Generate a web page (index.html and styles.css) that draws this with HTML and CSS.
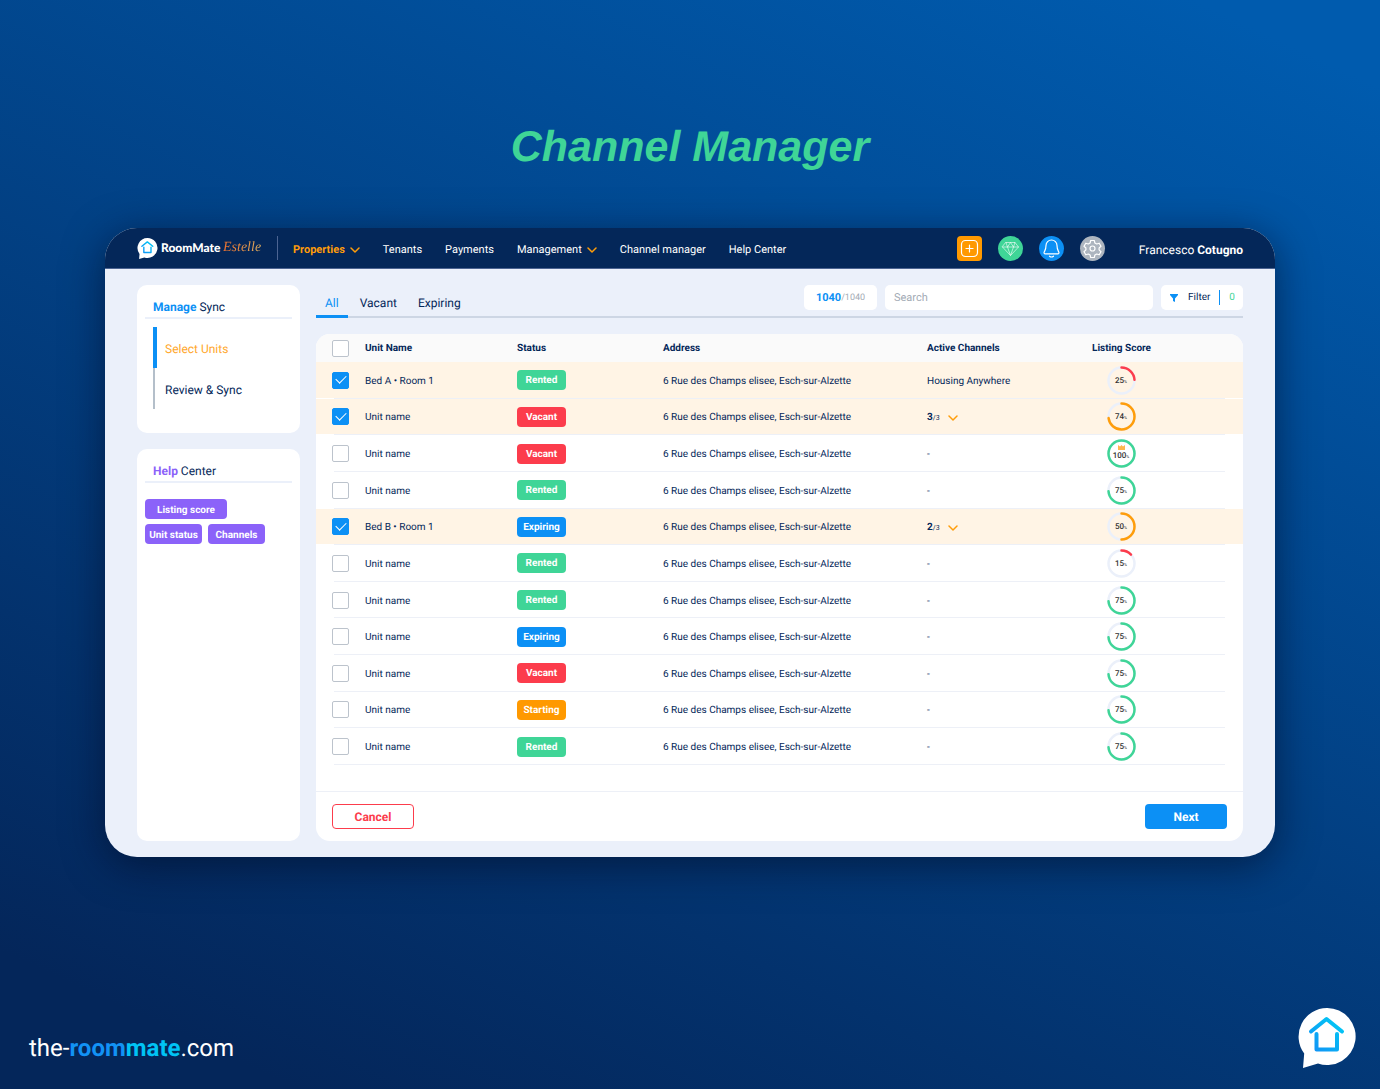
FILE: index.html
```html
<!DOCTYPE html>
<html lang="en">
<head>
<meta charset="utf-8">
<meta name="viewport" content="width=device-width, initial-scale=1">
<title>Channel Manager</title>
<link rel="stylesheet" href="styles.css">
</head>
<body>
<svg class="defs" aria-hidden="true">
  <defs>
    <linearGradient id="house-blue" x1="0" y1="1" x2="1" y2="0"><stop offset="0" stop-color="#1292f5"/><stop offset="1" stop-color="#00cdf5"/></linearGradient>
    <symbol id="logo" viewBox="0 0 58 60">
      <path fill="#fff" d="M29 0a28.500 28.500 0 1 1-9 55.500L5 60l1.200-14.500A28.500 28.500 0 0 1 29 0z"/>
      <path fill="none" stroke="url(#house-blue)" stroke-width="4" stroke-linecap="round" stroke-linejoin="round" d="M13 23.500 28.500 11 44 23.500M18.500 26v15.500h20.500V26"/>
    </symbol>
    <symbol id="chevron" viewBox="0 0 10 6"><path fill="none" stroke="#ff9d0a" stroke-width="1.500" stroke-linecap="round" stroke-linejoin="round" d="M1 1l4 4 4-4"/></symbol>
    <symbol id="track" viewBox="0 0 29 29"><circle cx="14.500" cy="14.500" r="13" fill="none" stroke="#ebf0fa" stroke-width="2.500"/></symbol>
  </defs>
</svg>

<h1 class="title">Channel Manager</h1>

<div class="app">
  <header class="topbar">
    <a class="brand" href="#"><svg class="brand-mark" aria-hidden="true"><use href="#logo"/></svg><span class="brand-name">RoomMate</span><span class="brand-sub">Estelle</span></a>
    <nav class="nav">
      <a class="nav-link active" href="#">Properties<svg class="chevron"><use href="#chevron"/></svg></a>
      <a class="nav-link" href="#">Tenants</a>
      <a class="nav-link" href="#">Payments</a>
      <a class="nav-link" href="#">Management<svg class="chevron"><use href="#chevron"/></svg></a>
      <a class="nav-link" href="#">Channel manager</a>
      <a class="nav-link" href="#">Help Center</a>
    </nav>
    <div class="actions">
      <button class="action add" type="button" aria-label="Add"><svg viewBox="0 0 25 25"><rect x="4.500" y="4.500" width="16" height="16" rx="4"/><path d="M12.500 9v7M9 12.500h7"/></svg></button>
      <button class="action gem" type="button" aria-label="Premium"><svg class="thin" viewBox="0 0 25 25"><path d="M8 6.500h9l3.500 4.500-8 8.500-8-8.500zM4.500 11h16M8 6.500 9.500 11l3 8.500 3-8.500L17 6.500M9.500 11l3-4.500 3 4.500"/></svg></button>
      <button class="action bell" type="button" aria-label="Notifications"><svg viewBox="0 0 25 25"><path d="M12.500 4a5.500 5.500 0 0 0-5.500 5.500c0 4-1 5-1.800 6.500-.4 1 0 1.800 1 1.800h12.600c1 0 1.400-.8 1-1.800C19 14.500 18 13.500 18 9.500A5.500 5.500 0 0 0 12.500 4zM10.500 20.200q2 1.600 4 0"/></svg></button>
      <button class="action gear" type="button" aria-label="Settings"><svg viewBox="0 0 25 25"><circle cx="12.500" cy="12.500" r="2.500"/><path d="M10.700 4.500h3.600l.6 2.500 1.800 1 2.500-.8 1.800 3.100-1.900 1.700v1.900l1.900 1.800-1.800 3.100-2.500-.8-1.800 1-.6 2.500h-3.600l-.6-2.500-1.800-1-2.500.8L4 15.700l1.900-1.800V12L4 10.300l1.800-3.100 2.500.8 1.800-1z"/></svg></button>
    </div>
    <div class="user">Francesco <b>Cotugno</b></div>
  </header>

  <div class="content">
    <aside class="sidebar">
      <section class="side-card">
        <h2 class="side-title"><b class="blue">Manage</b> Sync</h2>
        <ol class="steps">
          <li class="step current"><a href="#">Select Units</a></li>
          <li class="step"><a href="#">Review &amp; Sync</a></li>
        </ol>
      </section>
      <section class="side-card help">
        <h2 class="side-title"><b class="violet">Help</b> Center</h2>
        <div class="tags">
          <button class="tag wide" type="button">Listing score</button>
          <button class="tag" type="button">Unit status</button>
          <button class="tag" type="button">Channels</button>
        </div>
      </section>
    </aside>

    <main class="main">
      <div class="toolbar">
        <nav class="tabs">
          <a class="tab selected" href="#">All</a>
          <a class="tab" href="#">Vacant</a>
          <a class="tab" href="#">Expiring</a>
        </nav>
        <div class="tools">
          <div class="count"><b>1040</b><span>/1040</span></div>
          <input class="search" type="search" placeholder="Search" aria-label="Search">
          <button class="filter" type="button"><svg class="funnel" viewBox="0 0 8 8"><path fill="#0c90f5" d="M0 0h8v1L5 4.500V8L3 7V4.500L0 1z"/></svg>Filter<span class="filter-count">0</span></button>
        </div>
      </div>

      <div class="card">
        <table class="units">
          <colgroup><col class="c-check"><col class="c-name"><col class="c-status"><col><col class="c-channels"><col class="c-score"></colgroup>
          <thead><tr>
            <th class="pick"><input class="check" type="checkbox" aria-label="Select all"></th><th>Unit Name</th><th>Status</th><th>Address</th><th>Active Channels</th><th>Listing Score</th>
          </tr></thead>
          <tbody>
            <tr class="picked"><td class="pick"><input class="check" type="checkbox" aria-label="Select unit 1" checked></td><td class="txt">Bed A • Room 1</td><td><span class="badge rented">Rented</span></td><td class="txt">6 Rue des Champs elisee, Esch-sur-Alzette</td><td class="txt">Housing Anywhere</td>
              <td><svg class="ring low" viewBox="0 0 29 29"><use href="#track"/><circle class="arc" cx="14.500" cy="14.500" r="13" pathLength="100" stroke-dasharray="24 100"/><text x="14" y="17">25<tspan class="pc">%</tspan></text></svg></td></tr>
            <tr class="picked"><td class="pick"><input class="check" type="checkbox" aria-label="Select unit 2" checked></td><td class="txt">Unit name</td><td><span class="badge vacant">Vacant</span></td><td class="txt">6 Rue des Champs elisee, Esch-sur-Alzette</td><td class="txt"><button class="more" type="button"><b>3</b><small>/3</small><svg class="chevron"><use href="#chevron"/></svg></button></td>
              <td><svg class="ring mid" viewBox="0 0 29 29"><use href="#track"/><circle class="arc" cx="14.500" cy="14.500" r="13" pathLength="100" stroke-dasharray="73 100"/><text x="14" y="17">74<tspan class="pc">%</tspan></text></svg></td></tr>
            <tr><td class="pick"><input class="check" type="checkbox" aria-label="Select unit 3"></td><td class="txt">Unit name</td><td><span class="badge vacant">Vacant</span></td><td class="txt">6 Rue des Champs elisee, Esch-sur-Alzette</td><td class="txt">-</td>
              <td><svg class="ring high" viewBox="0 0 29 29"><use href="#track"/><circle class="arc" cx="14.500" cy="14.500" r="13"/><path fill="#ffb64d" d="M11 6l2 1.500L14.500 6 16 7.500 18 6v5h-7z"/><text x="14" y="19">100<tspan class="pc">%</tspan></text></svg></td></tr>
            <tr><td class="pick"><input class="check" type="checkbox" aria-label="Select unit 4"></td><td class="txt">Unit name</td><td><span class="badge rented">Rented</span></td><td class="txt">6 Rue des Champs elisee, Esch-sur-Alzette</td><td class="txt">-</td>
              <td><svg class="ring high" viewBox="0 0 29 29"><use href="#track"/><circle class="arc" cx="14.500" cy="14.500" r="13" pathLength="100" stroke-dasharray="74 100"/><text x="14" y="17">75<tspan class="pc">%</tspan></text></svg></td></tr>
            <tr class="picked"><td class="pick"><input class="check" type="checkbox" aria-label="Select unit 5" checked></td><td class="txt">Bed B • Room 1</td><td><span class="badge expiring">Expiring</span></td><td class="txt">6 Rue des Champs elisee, Esch-sur-Alzette</td><td class="txt"><button class="more" type="button"><b>2</b><small>/3</small><svg class="chevron"><use href="#chevron"/></svg></button></td>
              <td><svg class="ring mid" viewBox="0 0 29 29"><use href="#track"/><circle class="arc" cx="14.500" cy="14.500" r="13" pathLength="100" stroke-dasharray="50 100"/><text x="14" y="17">50<tspan class="pc">%</tspan></text></svg></td></tr>
            <tr><td class="pick"><input class="check" type="checkbox" aria-label="Select unit 6"></td><td class="txt">Unit name</td><td><span class="badge rented">Rented</span></td><td class="txt">6 Rue des Champs elisee, Esch-sur-Alzette</td><td class="txt">-</td>
              <td><svg class="ring low" viewBox="0 0 29 29"><use href="#track"/><circle class="arc" cx="14.500" cy="14.500" r="13" pathLength="100" stroke-dasharray="13 100"/><text x="14" y="17">15<tspan class="pc">%</tspan></text></svg></td></tr>
            <tr><td class="pick"><input class="check" type="checkbox" aria-label="Select unit 7"></td><td class="txt">Unit name</td><td><span class="badge rented">Rented</span></td><td class="txt">6 Rue des Champs elisee, Esch-sur-Alzette</td><td class="txt">-</td>
              <td><svg class="ring high" viewBox="0 0 29 29"><use href="#track"/><circle class="arc" cx="14.500" cy="14.500" r="13" pathLength="100" stroke-dasharray="74 100"/><text x="14" y="17">75<tspan class="pc">%</tspan></text></svg></td></tr>
            <tr><td class="pick"><input class="check" type="checkbox" aria-label="Select unit 8"></td><td class="txt">Unit name</td><td><span class="badge expiring">Expiring</span></td><td class="txt">6 Rue des Champs elisee, Esch-sur-Alzette</td><td class="txt">-</td>
              <td><svg class="ring high" viewBox="0 0 29 29"><use href="#track"/><circle class="arc" cx="14.500" cy="14.500" r="13" pathLength="100" stroke-dasharray="74 100"/><text x="14" y="17">75<tspan class="pc">%</tspan></text></svg></td></tr>
            <tr><td class="pick"><input class="check" type="checkbox" aria-label="Select unit 9"></td><td class="txt">Unit name</td><td><span class="badge vacant">Vacant</span></td><td class="txt">6 Rue des Champs elisee, Esch-sur-Alzette</td><td class="txt">-</td>
              <td><svg class="ring high" viewBox="0 0 29 29"><use href="#track"/><circle class="arc" cx="14.500" cy="14.500" r="13" pathLength="100" stroke-dasharray="74 100"/><text x="14" y="17">75<tspan class="pc">%</tspan></text></svg></td></tr>
            <tr><td class="pick"><input class="check" type="checkbox" aria-label="Select unit 10"></td><td class="txt">Unit name</td><td><span class="badge starting">Starting</span></td><td class="txt">6 Rue des Champs elisee, Esch-sur-Alzette</td><td class="txt">-</td>
              <td><svg class="ring high" viewBox="0 0 29 29"><use href="#track"/><circle class="arc" cx="14.500" cy="14.500" r="13" pathLength="100" stroke-dasharray="74 100"/><text x="14" y="17">75<tspan class="pc">%</tspan></text></svg></td></tr>
            <tr><td class="pick"><input class="check" type="checkbox" aria-label="Select unit 11"></td><td class="txt">Unit name</td><td><span class="badge rented">Rented</span></td><td class="txt">6 Rue des Champs elisee, Esch-sur-Alzette</td><td class="txt">-</td>
              <td><svg class="ring high" viewBox="0 0 29 29"><use href="#track"/><circle class="arc" cx="14.500" cy="14.500" r="13" pathLength="100" stroke-dasharray="74 100"/><text x="14" y="17">75<tspan class="pc">%</tspan></text></svg></td></tr>
          </tbody>
        </table>
        <div class="card-foot">
          <button class="btn cancel" type="button">Cancel</button>
          <button class="btn next" type="button">Next</button>
        </div>
      </div>
    </main>
  </div>
</div>

<footer class="site-foot">
  <a class="site" href="#">the-<b class="room">room</b><b class="mate">mate</b>.com</a>
  <svg class="site-mark" aria-hidden="true"><use href="#logo"/></svg>
</footer>
</body>
</html>
```
FILE: styles.css
```css
:root {
  --navy: #042759;
  --blue: #0c90f5;
  --green: #3fd597;
  --red: #fc3c4c;
  --orange: #ff9d0a;
  --violet: #8b62f9;
  --mist: #ebf0fa;
}

* { box-sizing: border-box; }

body {
  margin: 0;
  min-height: 100vh;
  display: flex;
  flex-direction: column;
  font-family: Roboto, "Liberation Sans", sans-serif;
  font-size: 10px;
  text-rendering: geometricPrecision;
  color: var(--navy);
  background: linear-gradient(205deg, #005bae 5%, #04265a 92%);
}

a { color: inherit; text-decoration: none; }
button { font: inherit; color: inherit; text-rendering: inherit; border: 0; padding: 0; background: none; }
h1, h2, ol { margin: 0; padding: 0; }
svg { display: block; }
.defs { position: absolute; width: 0; height: 0; }

.title {
  margin: 121px 0 55px;
  text-align: center;
  font: italic bold 43px/52px "Liberation Sans", Arial, sans-serif;
  color: var(--green);
}

.app {
  margin: 0 105px;
  border-radius: 32px;
  overflow: hidden;
  background: var(--mist);
  box-shadow: 0 8px 40px rgba(0, 8, 30, .55);
}

/* Top bar */
.topbar {
  display: flex;
  align-items: center;
  height: 41px;
  padding: 0 32px;
  background: var(--navy);
  border-bottom: 1px solid #4c6492;
  color: #fff;
}
.brand {
  display: flex;
  align-items: center;
  height: 24px;
  padding-right: 15px;
  border-right: 1px solid #4c6492;
}
.brand-mark { width: 21px; height: 21px; margin-right: 3px; }
.brand-name { font: 900 12px/16px Lato, sans-serif; width: 62px; }
.brand-sub {
  font: italic 14px/18px "Liberation Serif", serif;
  background: linear-gradient(90deg, #f0702c, #e0b060);
  background-clip: text;
  color: transparent;
  width: 39px;
}
.nav { display: flex; gap: 23px; margin-left: 15px; padding-top: 3px; }
.nav-link { display: flex; align-items: center; gap: 5px; font-size: 11px; line-height: 18px; white-space: nowrap; }
.nav-link.active { color: var(--orange); font-weight: 700; }
.chevron { width: 10px; height: 6px; }
.actions { display: flex; gap: 16px; margin-left: auto; }
.action { width: 25px; height: 25px; border-radius: 50%; }
.action svg { width: 25px; height: 25px; fill: none; stroke: #fff; stroke-width: 1.2; stroke-linecap: round; stroke-linejoin: round; }
.action .thin { stroke-width: .6; }
.add { background: #ff9900; border-radius: 4px; }
.gem { background: var(--green); }
.bell { background: var(--blue); }
.gear { background: #adb5bf; }
.user { margin-left: 34px; padding-top: 3px; font-size: 12px; line-height: 18px; white-space: nowrap; }
.user b { font-weight: 700; }

/* Sidebar */
.content { display: flex; gap: 16px; padding: 16px 32px; }
.sidebar { display: flex; flex-direction: column; gap: 16px; width: 163px; }
.side-card { padding: 12px 8px 24px; border-radius: 10px; background: #fff; }
.help { flex: 1; }
.side-title {
  padding: 0 8px;
  border-bottom: 2px solid var(--mist);
  font-size: 12px;
  line-height: 20px;
  font-weight: 400;
}
.blue { color: var(--blue); }
.violet { color: var(--violet); }
.steps { list-style: none; margin: 8px 8px 0; }
.step { height: 41px; padding-left: 10px; border-left: 2px solid #b4bfca; font-size: 12px; line-height: 44px; }
.step.current { padding-left: 8px; border-left: 4px solid var(--blue); color: #ffa72b; }
.tags { display: flex; flex-wrap: wrap; gap: 5px 6px; margin: 16px 20px 0 0; }
.tag { height: 20px; padding: 2px 4px 0; min-width: 57px; border-radius: 4px; background: var(--violet); color: #fff; font-weight: 700; }
.tag.wide { width: 82px; }

/* Tabs and tools */
.main { flex: 1; min-width: 0; display: flex; flex-direction: column; }
.toolbar {
  display: flex;
  justify-content: space-between;
  height: 33px;
  border-bottom: 2px solid #cdd6e4;
}
.tabs { display: flex; gap: 3px; }
.tab { height: 33px; padding: 0 9px; font-size: 12px; line-height: 36px; }
.tab.selected { color: var(--blue); border-bottom: 3px solid var(--blue); }
.tools { display: flex; gap: 8px; height: 25px; }
.count, .filter { display: flex; align-items: center; border-radius: 5px; background: #fff; }
.count { width: 73px; justify-content: center; color: #a3abb5; font-size: 9px; }
.count b { color: var(--blue); font-size: 11px; }
.search { width: 268px; padding: 0 9px; border: 0; border-radius: 5px; background: #fff; color: var(--navy); font: 11px Roboto, sans-serif; text-rendering: inherit; }
.search::placeholder { color: #a3abb5; }
.filter { width: 82px; padding-left: 9px; }
.funnel { width: 8px; height: 8px; margin-right: 10px; }
.filter-count { margin-left: 9px; padding-left: 9px; border-left: 1px solid var(--blue); line-height: 15px; color: var(--green); }

/* Units table */
.card { flex: 1; margin-top: 16px; border-radius: 14px; background: #fff; overflow: hidden; }
.units { width: 100%; height: 431px; table-layout: fixed; border-spacing: 0; margin-bottom: 26px; }
.c-check { width: 49px; }
.c-name { width: 152px; }
.c-status { width: 146px; }
.c-channels { width: 165px; }
.c-score { width: 151px; }
.units th, .units td { padding: 0; text-align: left; vertical-align: middle; white-space: nowrap; }
.units th { height: 28px; background: #fafafa; font-weight: 700; }
.units .pick { padding-left: 16px; }
.units .txt { padding-top: 2px; }
.units tbody tr {
  background:
    linear-gradient(#edf0f7, #edf0f7) 50% 100% / calc(100% - 36px) 1px no-repeat,
    linear-gradient(#fff, #fff) 0 100% / 100% 1px no-repeat;
}
.units tbody .picked { background-color: #fff4e5; }

.check {
  appearance: none;
  display: grid;
  place-items: center;
  width: 17px;
  height: 17px;
  margin: 0;
  border: 1px solid #bcc3cc;
  border-radius: 2px;
  background: #fff;
}
.check:checked { border-color: var(--blue); background: var(--blue); }
.check:checked::after {
  content: "";
  width: 9px;
  height: 5px;
  margin-bottom: 4px;
  border: solid #fff;
  border-width: 0 0 1px 1px;
  transform: rotate(-45deg);
}

.badge {
  display: block;
  width: 49px;
  height: 20px;
  border-radius: 4px;
  text-align: center;
  line-height: 22px;
  font-weight: 700;
  color: #fff;
}
.rented { background: var(--green); }
.vacant { background: var(--red); }
.expiring { background: var(--blue); }
.starting { background: #ff9900; }

.more { display: flex; align-items: center; }
.more small { font-size: 7px; }
.more .chevron { margin-left: 8px; }

.ring { width: 29px; height: 29px; margin-left: 15px; }
.arc { fill: none; stroke-width: 2.5; stroke-linecap: round; transform: rotate(-90deg); transform-origin: center; }
.low .arc { stroke: var(--red); }
.mid .arc { stroke: #ff9d0a; }
.high .arc { stroke: var(--green); }
.ring text { font-size: 8px; font-weight: 500; fill: #333; text-anchor: middle; }
.ring .pc { font-size: 4px; }

.card-foot { display: flex; justify-content: space-between; padding: 12px 16px; border-top: 1px solid #edf0f7; }
.btn { width: 82px; height: 25px; border-radius: 4px; font-size: 12px; font-weight: 700; }
.cancel { border: 1px solid var(--red); color: var(--red); }
.next { background: var(--blue); color: #fff; }

/* Page footer */
.site-foot { display: flex; justify-content: space-between; align-items: flex-end; margin-top: auto; padding: 0 24px 21px 29px; }
.site { font-size: 24px; line-height: 40px; color: #fff; }
.room { color: #1292f5; }
.mate { color: #00c3f5; }
.site-mark { width: 58px; height: 60px; }
```
